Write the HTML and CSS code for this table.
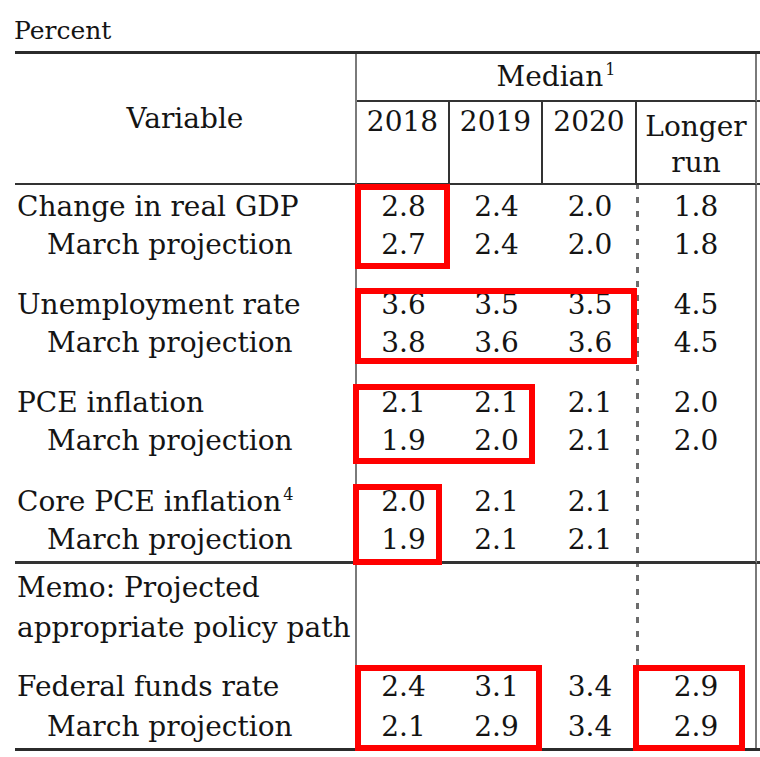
FILE: index.html
```html
<!DOCTYPE html>
<html lang="en">
<head>
<meta charset="utf-8">
<title>Economic projections</title>
<link rel="stylesheet" href="styles.css">
</head>
<body>
<div class="page">
  <div class="caption">Percent</div>
  <table class="proj">
    <colgroup>
      <col class="c-var">
      <col class="c-yr">
      <col class="c-yr">
      <col class="c-yr3">
      <col class="c-lr">
      <col class="c-x">
    </colgroup>
    <thead>
      <tr>
        <th rowspan="2" class="var">Variable</th>
        <th colspan="4" class="median">Median<sup>1</sup></th>
        <th class="x hx"></th>
      </tr>
      <tr>
        <th class="yr">2018</th>
        <th class="yr">2019</th>
        <th class="yr">2020</th>
        <th class="yr lr">Longer<br>run</th>
        <th class="x hx"></th>
      </tr>
    </thead>
    <tbody>
      <tr class="first">
        <td class="lab">Change in real GDP</td>
        <td class="n">2.8</td><td class="n">2.4</td><td class="n n3">2.0</td><td class="n n4">1.8</td><td class="x"></td>
      </tr>
      <tr>
        <td class="lab sub">March projection</td>
        <td class="n">2.7</td><td class="n">2.4</td><td class="n n3">2.0</td><td class="n n4">1.8</td><td class="x"></td>
      </tr>
      <tr class="gs">
        <td class="lab">Unemployment rate</td>
        <td class="n">3.6</td><td class="n">3.5</td><td class="n n3">3.5</td><td class="n n4">4.5</td><td class="x"></td>
      </tr>
      <tr>
        <td class="lab sub">March projection</td>
        <td class="n">3.8</td><td class="n">3.6</td><td class="n n3">3.6</td><td class="n n4">4.5</td><td class="x"></td>
      </tr>
      <tr class="gs">
        <td class="lab">PCE inflation</td>
        <td class="n">2.1</td><td class="n">2.1</td><td class="n n3">2.1</td><td class="n n4">2.0</td><td class="x"></td>
      </tr>
      <tr>
        <td class="lab sub">March projection</td>
        <td class="n">1.9</td><td class="n">2.0</td><td class="n n3">2.1</td><td class="n n4">2.0</td><td class="x"></td>
      </tr>
      <tr class="gs gs4">
        <td class="lab">Core PCE inflation<sup>4</sup></td>
        <td class="n">2.0</td><td class="n">2.1</td><td class="n n3">2.1</td><td class="n n4"></td><td class="x"></td>
      </tr>
      <tr class="sep">
        <td class="lab sub">March projection</td>
        <td class="n">1.9</td><td class="n">2.1</td><td class="n n3">2.1</td><td class="n n4"></td><td class="x"></td>
      </tr>
      <tr class="memo memo1">
        <td class="lab">Memo: Projected</td>
        <td class="n"></td><td class="n"></td><td class="n n3"></td><td class="n n4"></td><td class="x"></td>
      </tr>
      <tr class="memo">
        <td class="lab">appropriate policy path</td>
        <td class="n"></td><td class="n"></td><td class="n n3"></td><td class="n n4"></td><td class="x"></td>
      </tr>
      <tr class="memo fed1">
        <td class="lab">Federal funds rate</td>
        <td class="n">2.4</td><td class="n">3.1</td><td class="n n3">3.4</td><td class="n n4">2.9</td><td class="x"></td>
      </tr>
      <tr class="memo last">
        <td class="lab sub">March projection</td>
        <td class="n">2.1</td><td class="n">2.9</td><td class="n n3">3.4</td><td class="n n4">2.9</td><td class="x"></td>
      </tr>
    </tbody>
  </table>

  <div class="hl hl-gdp"></div>
  <div class="hl hl-unemp"></div>
  <div class="hl hl-pce"></div>
  <div class="hl hl-core"></div>
  <div class="hl hl-fed"></div>
  <div class="hl hl-fedlr"></div>
</div>
</body>
</html>
```

FILE: styles.css
```css
html, body {
  margin: 0;
  padding: 0;
  background: #ffffff;
}

body {
  overflow: hidden;
}

.page {
  position: relative;
  padding: 16px 0 0 15px;
  font-family: "DejaVu Serif", "Liberation Serif", serif;
  color: #141414;
}

.caption {
  font-size: 25px;
  line-height: 30px;
  margin: 0 0 5px -1px;
}

.proj {
  border-collapse: separate;
  border-spacing: 0;
  table-layout: fixed;
  width: 745px;
  font-size: 28px;
  border-top: 3px solid #2b2b2b;
  border-bottom: 3px solid #2b2b2b;
}

.c-var { width: 342px; }
.c-yr { width: 93px; }
.c-yr3 { width: 94px; }
.c-lr { width: 120px; }
.c-x { width: 3px; }

.proj th,
.proj td {
  padding: 0;
  line-height: 38px;
  font-weight: normal;
  white-space: nowrap;
  vertical-align: top;
}

.proj sup {
  font-size: 16px;
  line-height: 0;
  vertical-align: 11px;
  margin-left: 2px;
}

/* header */
.proj th.var {
  text-align: center;
  vertical-align: middle;
  border-right: 2px solid #7a7a7a;
  border-bottom: 2px solid #333333;
}

.proj th.median {
  text-align: center;
  padding: 4px 0 4px;
  border-bottom: 2px solid #333333;
  border-right: 2px solid #7a7a7a;
}

.proj th.hx {
  border-bottom: 2px solid #333333;
}

.proj th.yr {
  text-align: center;
  padding-top: 1px;
  border-right: 2px solid #333333;
  border-bottom: 2px solid #333333;
}

.proj th.lr {
  line-height: 36px;
  padding: 7px 0 2px;
  border-right: 2px solid #7a7a7a;
}

/* body */
.proj td.lab {
  padding-left: 2px;
  text-align: left;
  border-right: 2px solid #7a7a7a;
}

.proj td.sub {
  padding-left: 32px;
}

.proj td.n {
  text-align: center;
}

/* dashed rule between 2020 and longer run: a fixed-attached pattern keeps the dash phase continuous across rows */
.proj td.n3,
.proj td.n4 {
  background-image: linear-gradient(to bottom, #6c6c6c 0 6px, transparent 6px 14px);
  background-size: 3px 14px;
  background-position: 636px 1px;
  background-repeat: repeat-y;
  background-attachment: fixed;
}

.proj td.n4 {
  border-right: 2px solid #7a7a7a;
}

.proj tr.first td {
  padding-top: 3px;
}

.proj tr.gs td {
  padding-top: 22px;
}

.proj tr.gs4 td {
  padding-top: 23px;
}

.proj tr.sep td {
  padding-bottom: 2px;
  border-bottom: 3px solid #333333;
}

.proj tr.memo td {
  line-height: 40px;
}

.proj tr.memo1 td {
  padding-top: 4px;
}

.proj tr.fed1 td {
  padding-top: 19px;
}

.proj tr.last td {
  padding-bottom: 1px;
}

/* red highlight overlays */
.hl {
  position: absolute;
  box-sizing: border-box;
  border: 6px solid #ff0000;
}

.hl-gdp { left: 355px; top: 184px; width: 95px; height: 85px; }
.hl-unemp { left: 355px; top: 288px; width: 282px; height: 76px; }
.hl-pce { left: 353px; top: 384px; width: 182px; height: 80px; }
.hl-core { left: 353px; top: 484px; width: 89px; height: 81px; }
.hl-fed { left: 355px; top: 665px; width: 187px; height: 86px; }
.hl-fedlr { left: 633px; top: 665px; width: 112px; height: 86px; }
```
